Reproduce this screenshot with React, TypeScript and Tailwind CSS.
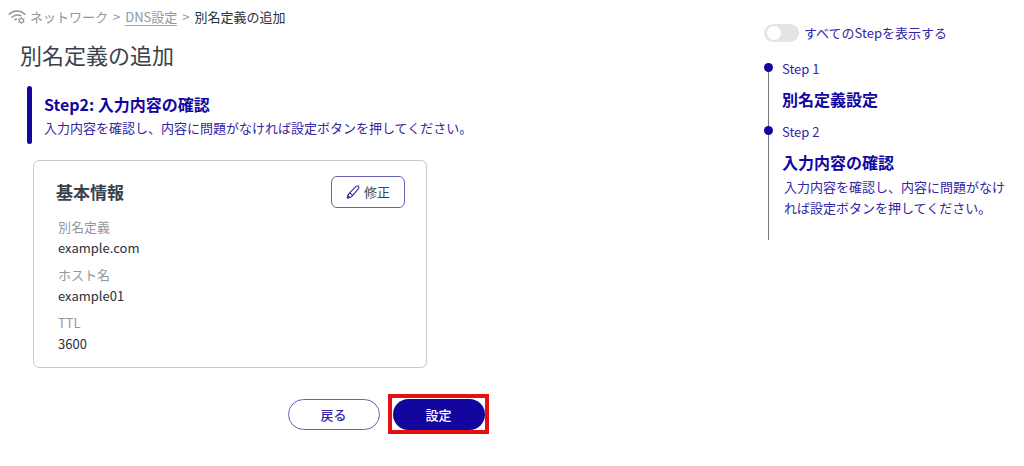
import { useState } from 'react';
import type { ReactNode } from 'react';

interface Field {
  label: string;
  value: string;
}

interface Step {
  name: string;
  title: string;
  description?: string;
}

const DESCRIPTION = '入力内容を確認し、内容に問題がなければ設定ボタンを押してください。';

const fields: Field[] = [
  { label: '別名定義', value: 'example.com' },
  { label: 'ホスト名', value: 'example01' },
  { label: 'TTL', value: '3600' },
];

const steps: Step[] = [
  { name: 'Step 1', title: '別名定義設定' },
  { name: 'Step 2', title: '入力内容の確認', description: DESCRIPTION },
];

function NetworkIcon() {
  return (
    <svg viewBox="0 0 18 16" className="h-4 w-[18px] shrink-0" fill="none" stroke="#929699" strokeLinecap="round" aria-hidden="true">
      <path d="M1.2 5.2C5.5 1 12.5 1 16.8 5.2" strokeWidth="1.6" />
      <path d="M4 8.2c2.6-2.3 6-2.8 9-1.4" strokeWidth="1.5" />
      <path d="M7 10.8c.5-.4 1-.6 1.5-.7" strokeWidth="1.5" />
      <circle cx="13.4" cy="11.6" r="2.1" strokeWidth="1.1" />
      <path
        d="M13.4 8.5v.8M13.4 13.9v.8M10.7 10.1l.7.4M15.4 12.7l.7.4M10.7 13.1l.7-.4M15.4 10.5l.7-.4"
        strokeWidth="1.1"
      />
    </svg>
  );
}

function PenIcon() {
  return (
    <svg viewBox="0 0 14 14" className="size-[14px]" fill="none" stroke="#3a2ba6" strokeWidth="1.1" strokeLinejoin="round" aria-hidden="true">
      <path d="M3.4 8.2 9.8 1.6C10.6.8 11.8.8 12.4 1.4s.5 1.7-.2 2.5L6.4 10.9" />
      <path d="M3.4 8.2C4.8 8.3 6.1 9.5 6.4 10.9L4.9 12.2 1.3 12.9 2.2 9.6Z" />
      <path d="M1.3 12.9 1.9 10.6 3.8 12.4Z" fill="#3a2ba6" />
    </svg>
  );
}

function Breadcrumb() {
  return (
    <nav aria-label="breadcrumb" className="flex h-5 items-center text-[13px] leading-5 text-[#929699]">
      <NetworkIcon />
      <span className="ml-1">ネットワーク</span>
      <span className="mx-[5px]">&gt;</span>
      <a href="#dns" className="border-b border-[#a5a8aa] leading-4">DNS設定</a>
      <span className="mx-[5px]">&gt;</span>
      <span className="text-[#28303a]">別名定義の追加</span>
    </nav>
  );
}

function StepHeader({ title, children }: { title: string; children: ReactNode }) {
  return (
    <div className="mt-4 ml-[19px] flex gap-3">
      <div className="w-[5px] rounded-full bg-[#12069f]" />
      <div className="py-1.5">
        <h2 className="text-[16px] leading-[25px] font-bold text-[#12069f]">{title}</h2>
        <p className="text-[13px] leading-[21px] text-[#3225a6]">{children}</p>
      </div>
    </div>
  );
}

function InfoCard() {
  return (
    <section className="mt-4 ml-[25px] max-w-[394px] rounded-md border border-[#c6cacd] px-[21px] pt-[15px] pb-[13px]">
      <div className="flex items-center justify-between">
        <h3 className="ml-px text-[17px] font-bold text-[#38424c]">基本情報</h3>
        <button
          type="button"
          className="flex h-8 w-[74px] items-center justify-center gap-1 rounded-md border border-[#6a60b8] text-[13px] text-[#38424c]"
        >
          <PenIcon />
          修正
        </button>
      </div>
      <dl className="mt-2 ml-[3px] flex flex-col gap-1.5 text-[13px] leading-[21px]">
        {fields.map((field) => (
          <div key={field.label}>
            <dt className="text-[#92989c]">{field.label}</dt>
            <dd className="text-[#28303a]">{field.value}</dd>
          </div>
        ))}
      </dl>
    </section>
  );
}

function StepNav() {
  const [showAll, setShowAll] = useState(false);

  return (
    <aside className="w-[260px] shrink-0 pt-6 pr-4 text-[13px] text-[#3225a6]">
      <label className="flex h-[18px] items-center gap-[5px]">
        <input
          type="checkbox"
          role="switch"
          checked={showAll}
          onChange={(e) => setShowAll(e.target.checked)}
          className="flex h-[18px] w-[35px] appearance-none items-center rounded-full bg-[#e3e4e6] px-[3px] before:size-[14px] before:rounded-full before:bg-white checked:justify-end checked:bg-[#12069f]"
        />
        すべてのStepを表示する
      </label>
      <ol className="mt-[21px]">
        {steps.map((step) => (
          <li key={step.name} className="flex gap-[9px]">
            <div className="flex w-[9px] shrink-0 flex-col items-center">
              <span className="size-[9px] rounded-full bg-[#12069f]" />
              <span className="w-px flex-1 bg-[#77777d]" />
            </div>
            <div className={step.description ? 'pb-[22px]' : 'pb-[15px]'}>
              <div className="leading-[12px]">{step.name}</div>
              <h3 className="mt-3 text-[16px] leading-6 font-bold text-[#12069f]">{step.title}</h3>
              {step.description && <p className="mt-0.5 ml-0.5 leading-[21px]">{step.description}</p>}
            </div>
          </li>
        ))}
      </ol>
    </aside>
  );
}

export default function App() {
  return (
    <div className="flex min-h-screen bg-white font-['Noto_Sans_CJK_JP',sans-serif]">
      <main className="min-w-0 flex-1 pt-[7px] pl-2">
        <Breadcrumb />
        <h1 className="mt-[11px] ml-3 text-[22px] leading-8 text-[#38424c]">別名定義の追加</h1>
        <StepHeader title="Step2: 入力内容の確認">{DESCRIPTION}</StepHeader>
        <InfoCard />
        <div className="mt-[30px] flex items-end justify-center gap-3 text-[13px]">
          <button type="button" className="h-[31px] w-[92px] rounded-full border border-[#6a60b8] font-medium text-[#3225a6]">
            戻る
          </button>
          <div className="pt-px pl-px outline-4 outline-[#e60f12]">
            <button type="button" className="block h-[31px] w-[92px] rounded-full bg-[#12069f] font-medium text-white">
              設定
            </button>
          </div>
        </div>
      </main>
      <StepNav />
    </div>
  );
}
